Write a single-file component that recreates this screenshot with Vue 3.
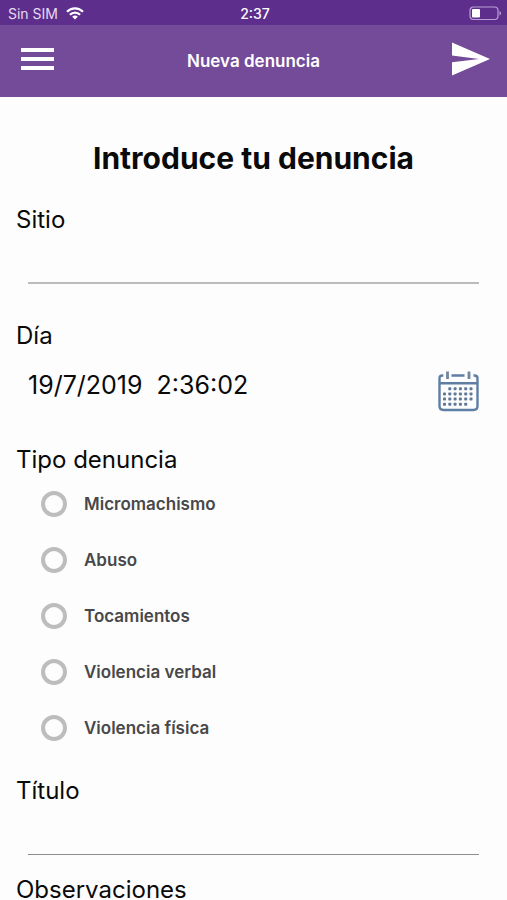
<script setup>
import { ref } from 'vue'

const place = ref('')
const date = ref('19/7/2019  2:36:02')
const kind = ref('')
const title = ref('')
const notes = ref('')
const kinds = ['Micromachismo', 'Abuso', 'Tocamientos', 'Violencia verbal', 'Violencia física']

// Calendar day dots: the first row starts one column in, the last ends one column early
const dots = []
for (let row = 0; row < 4; row++) {
  for (let col = 0; col < 6; col++) {
    if ((row === 0 && col === 0) || (row === 3 && col === 5)) continue
    dots.push({ x: 5 + col * 5.3, y: 16.2 + row * 5.2 })
  }
}
</script>

<template>
  <div class="screen">
    <div class="status">
      <div class="carrier">
        <span>Sin SIM</span>
        <svg width="18" height="13" viewBox="0 0 18 13" fill="none" stroke="#fff" stroke-width="2.2">
          <path d="M1 4.8C5.4.2 12.6.2 17 4.8" />
          <path d="M3.9 7.7c2.9-2.9 7.3-2.9 10.2 0" />
          <path d="M6.2 9.7c1.6-1.5 4-1.5 5.6 0L9 12.6z" fill="#fff" stroke="none" />
        </svg>
      </div>
      <span class="clock">2:37</span>
      <div class="battery">
        <svg width="33" height="15" viewBox="0 0 33 15">
          <rect x="1" y="1" width="28" height="12.5" rx="3.5" fill="none" stroke="#b9a0d6" stroke-width="1.2" />
          <rect x="3" y="3" width="8" height="8.5" rx="1" fill="#fff" />
          <path d="M30.5 5v4.5c2-.8 2-3.7 0-4.5z" fill="#b9a0d6" />
        </svg>
      </div>
    </div>

    <header class="bar">
      <button class="icon-button menu" type="button" aria-label="Menú">
        <svg width="33" height="23" viewBox="0 0 33 23" fill="#fff">
          <rect width="33" height="4" />
          <rect y="9" width="33" height="4" />
          <rect y="18" width="33" height="4" />
        </svg>
      </button>
      <h1 class="bar-title">Nueva denuncia</h1>
      <button class="icon-button send" type="submit" form="report" aria-label="Enviar">
        <svg width="38" height="34" viewBox="0 0 38 34" fill="#fff">
          <path d="M0 .5 38 17 0 33.5V20.3L27 17 0 13.5z" />
        </svg>
      </button>
    </header>

    <main class="content">
      <h2 class="heading">Introduce tu denuncia</h2>
      <form id="report" @submit.prevent>
        <div class="field">
          <label class="label" for="place">Sitio</label>
          <input id="place" v-model="place" class="line-input thick" type="text" />
        </div>

        <div class="field date-field">
          <label class="label" for="date">Día</label>
          <div class="date-row">
            <input id="date" v-model="date" class="date-input" type="text" />
            <button class="icon-button" type="button" aria-label="Elegir fecha">
              <svg width="41" height="41" viewBox="0 0 41 41" fill="none" stroke="#5e7ea3" stroke-width="2.4">
                <path d="M5.3 4.5H4.5Q1.5 4.5 1.5 7.5V35Q1.5 39 5.5 39H35.5Q39.5 39 39.5 35V7.5Q39.5 4.5 36.5 4.5H35.5" />
                <path d="M13.5 4.5h13M1.5 12.2h38" />
                <path d="M9.5.5v7.500M31 .5v7.500" stroke="#71869f" stroke-width="2.8" />
                <rect v-for="(d, i) in dots" :key="i" :x="d.x" :y="d.y" width="3" height="3" rx=".8" fill="#5f7896" stroke="none" />
              </svg>
            </button>
          </div>
        </div>

        <fieldset class="kinds">
          <legend class="label">Tipo denuncia</legend>
          <label v-for="name in kinds" :key="name" class="option">
            <input v-model="kind" class="radio" type="radio" name="kind" :value="name" />
            <span>{{ name }}</span>
          </label>
        </fieldset>

        <div class="field title-field">
          <label class="label" for="title">Título</label>
          <input id="title" v-model="title" class="line-input" type="text" />
        </div>

        <div class="field">
          <label class="label" for="notes">Observaciones</label>
          <textarea id="notes" v-model="notes" class="line-input" rows="3"></textarea>
        </div>
      </form>
    </main>
  </div>
</template>

<style>
body {
  margin: 0;
  background: #fdfdfd;
}
</style>

<style scoped>
.screen {
  display: flex;
  flex-direction: column;
  height: 100vh;
  color: #0a0a0a;
  background: #fdfdfd;
  font-family: Inter, "Liberation Sans", sans-serif;
}

.status {
  display: grid;
  grid-template-columns: 1fr auto 1fr;
  align-items: center;
  flex: none;
  height: 25px;
  padding: 2px 5px 0 8px;
  box-sizing: border-box;
  background: #5d2e8c;
  color: #fff;
  font-size: 14px;
}

.carrier {
  display: flex;
  align-items: center;
  gap: 8px;
  color: #e6daf2;
}

.clock {
  font-weight: 500;
}

.battery {
  display: flex;
  justify-content: flex-end;
}

.bar {
  display: grid;
  grid-template-columns: 1fr auto 1fr;
  align-items: center;
  flex: none;
  height: 72px;
  padding: 0 17px;
  box-sizing: border-box;
  background: #744b99;
  color: #fff;
}

.bar-title {
  margin: 0;
  font-size: 17px;
  font-weight: 600;
}

.icon-button {
  display: flex;
  padding: 0;
  border: 0;
  background: none;
  cursor: pointer;
}

.menu {
  justify-self: start;
  padding: 0 0 4px 4px;
}

.send {
  justify-self: end;
  padding-bottom: 4px;
}

.content {
  flex: 1;
  min-height: 0;
  padding: 41px 16px 0;
  overflow-y: auto;
  scrollbar-width: none;
}

.heading {
  margin: 0 0 26px;
  font-size: 30px;
  font-weight: 700;
  line-height: 40px;
  text-align: center;
}

.field {
  display: flex;
  flex-direction: column;
}

.label {
  padding: 0;
  font-size: 24px;
  line-height: 32px;
}

.line-input {
  height: 48px;
  margin: 0 12px;
  padding: 0;
  box-sizing: border-box;
  border: 0;
  border-bottom: 1px solid #8e8e8e;
  border-radius: 0;
  outline: none;
  resize: none;
  background: none;
  color: inherit;
  font: inherit;
  font-size: 24px;
}

.thick {
  border-bottom: 2px solid #bcbcbc;
}

.date-field {
  margin-top: 36px;
}

.date-row {
  display: flex;
  align-items: flex-end;
  gap: 16px;
  height: 60px;
  padding: 0 12px;
}

.date-input {
  flex: 1;
  min-width: 0;
  height: 52px;
  padding: 0 0 2px;
  box-sizing: border-box;
  border: 0;
  outline: none;
  background: none;
  color: inherit;
  font: inherit;
  font-size: 25px;
  line-height: 32px;
}

.kinds {
  min-width: 0;
  margin: 32px 0 0;
  padding: 0;
  border: 0;
}

.option {
  display: flex;
  align-items: center;
  gap: 17px;
  height: 56px;
  padding-left: 25px;
  color: #48484a;
  font-size: 17px;
  font-weight: 600;
}

.radio {
  width: 26px;
  height: 26px;
  margin: 0;
  box-sizing: border-box;
  appearance: none;
  border: 4px solid #bdbdbd;
  border-radius: 50%;
}

.radio:checked {
  border-color: #744b99;
}

.title-field {
  margin: 19px 0;
}
</style>
